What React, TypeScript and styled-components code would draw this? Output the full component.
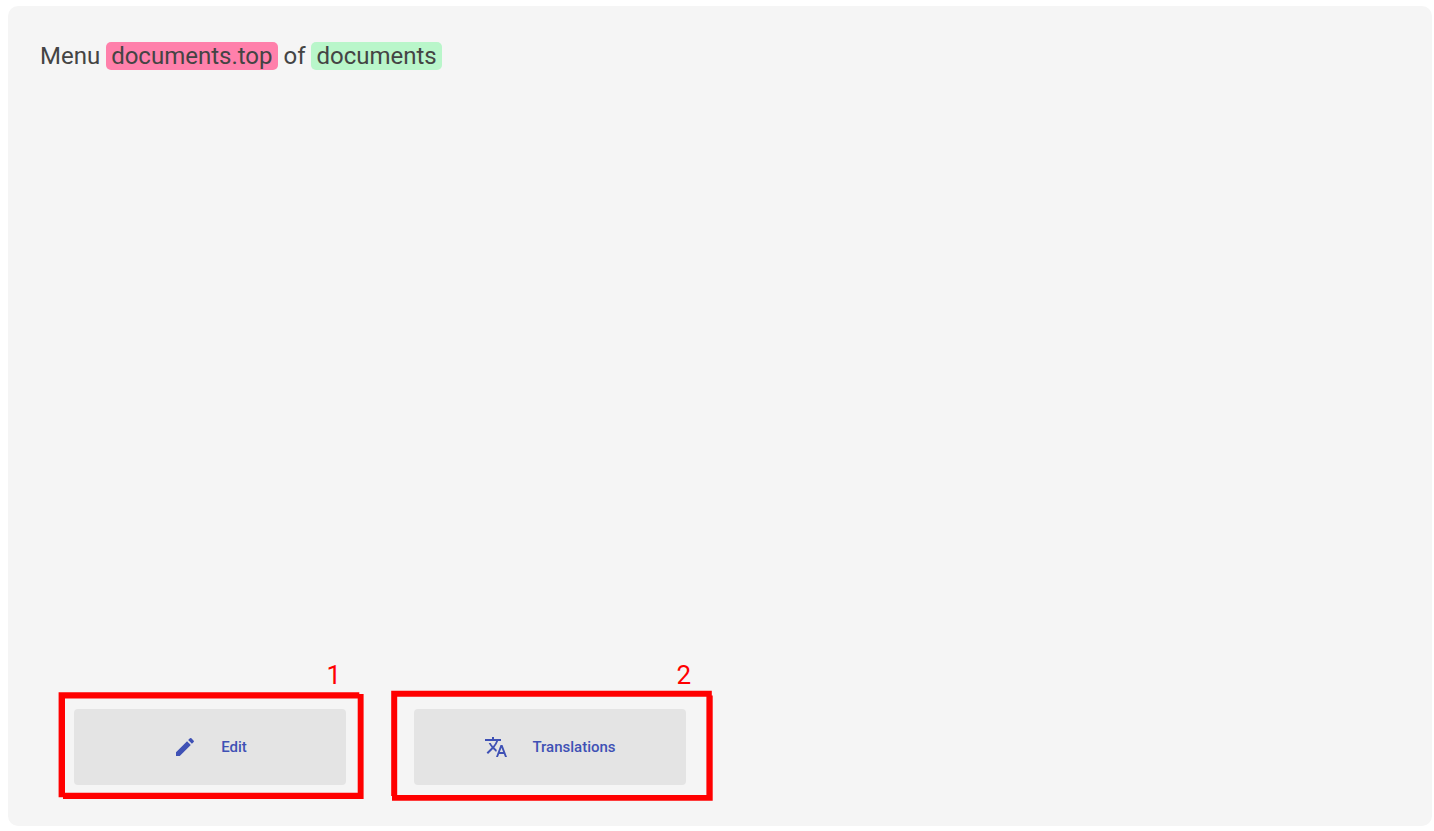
import React from "react";
import styled, { createGlobalStyle } from "styled-components";

const GlobalStyle = createGlobalStyle`
  *, *::before, *::after { box-sizing: border-box; }
  body {
    margin: 0;
    background: #ffffff;
    color: #444444;
    font-family: Roboto, "Liberation Sans", sans-serif;
  }
`;

const Page = styled.div`
  display: flex;
  min-height: 100vh;
  padding: 6px 2px 5px 8px;
`;

const Panel = styled.main`
  flex: 1;
  display: flex;
  flex-direction: column;
  justify-content: space-between;
  padding: 34px 32px 41px;
  border-radius: 10px;
  background: #f5f5f5;
`;

const Title = styled.h1`
  margin: 0;
  font-size: 24px;
  font-weight: 400;
  line-height: 32px;
`;

const Tag = styled.span<{ $color: string }>`
  padding: 0 5px;
  border-radius: 5px;
  background: ${({ $color }) => $color};
`;

const Actions = styled.div`
  display: flex;
  flex-wrap: wrap;
  gap: 68px;
  padding-left: 34px;
`;

const Action = styled.div`
  position: relative;
`;

const ActionButton = styled.button`
  display: flex;
  align-items: center;
  justify-content: center;
  gap: 24px;
  width: 272px;
  height: 76px;
  padding: 0;
  border: 0;
  border-radius: 4px;
  background: #e4e4e4;
  color: #3f51b5;
  font: 500 15px/24px Roboto, "Liberation Sans", sans-serif;
  cursor: pointer;
`;

const Icon = styled.svg`
  width: 24px;
  height: 24px;
  fill: currentColor;
`;

const Outline = styled.svg<{ $left: number; $top: number }>`
  position: absolute;
  left: ${({ $left }) => $left}px;
  top: ${({ $top }) => $top}px;
  fill: #ff0000;
  pointer-events: none;
`;

const Marker = styled.span<{ $right: number }>`
  position: absolute;
  right: ${({ $right }) => $right}px;
  bottom: 94px;
  color: #ff0000;
  font-size: 26px;
  line-height: 32px;
`;

export default function App() {
  return (
    <>
      <GlobalStyle />
      <Page>
        <Panel>
          <Title>
            Menu <Tag $color="#ff80ab">documents.top</Tag> of{" "}
            <Tag $color="#b9f6ca">documents</Tag>
          </Title>
          <Actions>
            <Action>
              <ActionButton type="button">
                <Icon viewBox="0 0 24 24" aria-hidden="true">
                  <path d="M3 17.25V21h3.75L17.81 9.94l-3.75-3.75L3 17.25zM20.71 7.04c.39-.39.39-1.02 0-1.41l-2.34-2.34a.9959.9959 0 0 0-1.41 0l-1.83 1.83 3.75 3.75 1.83-1.83z" />
                </Icon>
                Edit
              </ActionButton>
              <Outline $left={-16} $top={-18} width="307" height="109" aria-hidden="true">
                <path d="M.6 1.3H301.3V3H305.600V108H5V106.300H.6ZM7 7.600V101.700H299.700V7.600Z" fillRule="evenodd" />
              </Outline>
              <Marker $right={5}>1</Marker>
            </Action>
            <Action>
              <ActionButton type="button">
                <Icon viewBox="0 0 24 24" aria-hidden="true">
                  <path d="M12.87 15.07l-2.54-2.51.03-.03A17.52 17.52 0 0 0 14.07 6H17V4h-7V2H8v2H1v1.99h11.17C11.5 7.92 10.44 9.75 9 11.35 8.07 10.32 7.3 9.19 6.69 8h-2c.73 1.63 1.73 3.17 2.98 4.56l-5.09 5.02L4 19l5-5 3.11 3.11.76-2.04zM18.5 10h-2L12 22h2l1.12-3h4.75L21 22h2l-4.5-12zm-2.62 7l1.62-4.33L19.12 17h-3.24z" />
                </Icon>
                Translations
              </ActionButton>
              <Outline $left={-24} $top={-20} width="324" height="113" aria-hidden="true">
                <path d="M1.2 1.700H321.800V6.500H322.700V111.800H2V107H1.200ZM7.200 7.700V106H316.400V7.700Z" fillRule="evenodd" />
              </Outline>
              <Marker $right={-5}>2</Marker>
            </Action>
          </Actions>
        </Panel>
      </Page>
    </>
  );
}
